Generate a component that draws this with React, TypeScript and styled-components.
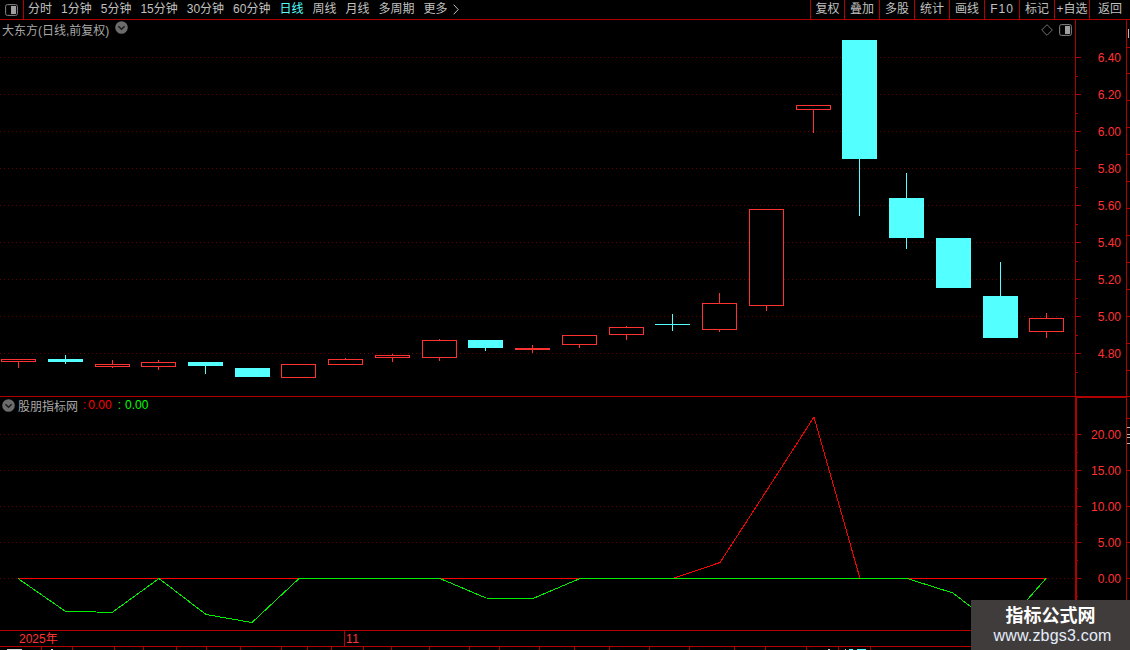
import React from "react";
import styled, { createGlobalStyle } from "styled-components";

const LINE = "#b00000";
const DOT = "#640000";
const RED = "#ff3232";
const PURE_RED = "#ff0000";
const CYAN = "#54ffff";
const GREEN = "#00f000";
const GREY = "#c0c0c0";
const FONT = `"Liberation Sans", "Noto Sans CJK SC", sans-serif`;

const Global = createGlobalStyle`
  html, body { margin: 0; padding: 0; background: #000; overflow: hidden; }
  body { font-family: ${FONT}; font-size: 12px; }
`;

const Page = styled.div`
  position: relative;
  width: 1130px;
  height: 650px;
  background: #000;
  overflow: hidden;
  display: flex;
  flex-direction: column;
`;

const Toolbar = styled.div`
  display: flex;
  align-items: center;
  height: 19px;
  flex: 0 0 19px;
  border-bottom: 1px solid ${LINE};
  box-sizing: content-box;
  color: ${GREY};
`;

const LayoutCell = styled.div`
  width: 23px;
  height: 100%;
  display: flex;
  align-items: center;
  justify-content: center;
  border-right: 1px solid ${LINE};
`;

const NavGroup = styled.nav`
  display: flex;
  align-items: center;
  gap: 9px;
  padding-left: 4px;
  flex: 1;
  white-space: nowrap;
`;

const NavItem = styled.span<{ $active?: boolean }>`
  color: ${(p) => (p.$active ? CYAN : GREY)};
  line-height: 19px;
`;

const MoreItem = styled(NavItem)`
  display: flex;
  align-items: center;
  gap: 5px;
`;

const ActionGroup = styled.div`
  display: flex;
  height: 100%;
`;

const ActionButton = styled.span<{ $w: number; $spaced?: boolean }>`
  width: ${(p) => p.$w}px;
  box-sizing: border-box;
  border-left: 1px solid ${LINE};
  line-height: 19px;
  text-align: center;
  white-space: nowrap;
  letter-spacing: ${(p) => (p.$spaced ? "1px" : "0")};
`;

const Pane = styled.section<{ $h: number }>`
  position: relative;
  display: flex;
  flex: 0 0 ${(p) => p.$h}px;
  height: ${(p) => p.$h}px;
  border-bottom: 1px solid ${LINE};
  box-sizing: content-box;
`;

const PlotSvg = styled.svg`
  display: block;
  flex: 0 0 1075px;
  width: 1075px;
  height: 100%;
  shape-rendering: crispEdges;
`;

const AxisSvg = styled.svg`
  display: block;
  flex: 0 0 55px;
  width: 55px;
  height: 100%;
  shape-rendering: crispEdges;
`;

const GridLine = styled.line`
  stroke: ${DOT};
  stroke-width: 1;
  stroke-dasharray: 1 3;
`;

const AxisStroke = styled.line<{ $w?: number; $pale?: boolean }>`
  stroke: ${(p) => (p.$pale ? "#b8b8b8" : LINE)};
  stroke-width: ${(p) => p.$w ?? 1};
`;

const AxisLabel = styled.text`
  fill: ${RED};
  font-family: ${FONT};
  font-size: 12px;
  text-anchor: end;
`;

const CandleBody = styled.rect<{ $cyan: boolean }>`
  fill: ${(p) => (p.$cyan ? CYAN : "#000")};
  stroke: ${(p) => (p.$cyan ? "none" : RED)};
  stroke-width: 1;
`;

const Wick = styled.line<{ $cyan: boolean }>`
  stroke: ${(p) => (p.$cyan ? CYAN : RED)};
  stroke-width: 1;
`;

const SeriesLine = styled.polyline<{ $color: string }>`
  fill: none;
  stroke: ${(p) => p.$color};
  stroke-width: 1;
`;

const FlatLine = styled.line<{ $color: string }>`
  stroke: ${(p) => p.$color};
  stroke-width: 1;
`;

const Legend = styled.div<{ $left: number; $top: number }>`
  position: absolute;
  left: ${(p) => p.$left}px;
  top: ${(p) => p.$top}px;
  display: flex;
  align-items: center;
  height: 16px;
  white-space: nowrap;
  color: #a8a8a8;
`;

const LegendValue = styled.span<{ $color: string; $gap: number }>`
  color: ${(p) => p.$color};
  margin-left: ${(p) => p.$gap}px;
`;

const PaneTools = styled.div`
  position: absolute;
  left: 1041px;
  top: 4px;
  display: flex;
  align-items: center;
  gap: 6px;
`;

const DateBar = styled.div`
  display: flex;
  flex: 0 0 15px;
  height: 15px;
  border-bottom: 1px solid ${LINE};
  box-sizing: content-box;
  color: ${RED};
  line-height: 17px;
`;

const YearCell = styled.span`
  width: 344px;
  padding-left: 19px;
  box-sizing: border-box;
`;

const MonthCell = styled.span`
  border-left: 1px solid ${LINE};
  padding-left: 1px;
  letter-spacing: 0.5px;
`;

const TabStrip = styled.div`
  display: flex;
  flex: 0 0 3px;
  height: 3px;
  overflow: hidden;
`;

const Tab = styled.span<{ $w: number }>`
  flex: 0 0 ${(p) => p.$w}px;
  box-sizing: border-box;
  border-right: 1px solid ${LINE};
  display: flex;
  align-items: flex-end;
`;

const TabMark = styled.i<{ $w: number; $ml: number; $cyan?: boolean }>`
  display: block;
  width: ${(p) => p.$w}px;
  height: 1px;
  margin-left: ${(p) => p.$ml}px;
  background: ${(p) => (p.$cyan ? CYAN : "#d0d0d0")};
`;

const Watermark = styled.aside`
  position: absolute;
  left: 971px;
  top: 600px;
  width: 159px;
  height: 50px;
  background: #413c3c;
  display: flex;
  flex-direction: column;
  align-items: center;
  color: #fff;
`;

const WatermarkTitle = styled.strong`
  font-size: 18px;
  line-height: 22px;
  margin-top: 5px;
`;

const WatermarkUrl = styled.span`
  font-size: 16px;
  line-height: 18px;
  letter-spacing: 0.2px;
  margin-left: 4px;
  color: #e4eefa;
`;

const PanelIcon = () => (
  <svg width="13" height="12" viewBox="0 0 13 12">
    <rect x="0.5" y="0.5" width="12" height="11" rx="2" fill="#111" stroke="#777" />
    <rect x="6" y="2" width="5" height="8" fill="#a0a0a0" />
    <rect x="2" y="2" width="4" height="8" fill="#000" />
  </svg>
);

const DiamondIcon = () => (
  <svg width="12" height="12" viewBox="0 0 12 12">
    <path d="M6 .7 11.3 6 6 11.3.7 6Z" fill="none" stroke="#707070" />
  </svg>
);

const CircleChevron = () => (
  <svg width="13" height="13" viewBox="0 0 13 13">
    <circle cx="6.5" cy="6.5" r="6.3" fill="#6c6c6c" />
    <path d="M3.4 5.2 6.5 8.2 9.6 5.2" fill="none" stroke="#1c1c1c" strokeWidth="1.6" />
  </svg>
);

const ChevronRight = () => (
  <svg width="6" height="11" viewBox="0 0 6 11">
    <path d="M.7.7 5.2 5.5.7 10.3" fill="none" stroke={GREY} />
  </svg>
);

type Candle = [x: number, top: number, bottom: number, high: number, low: number, cyan: boolean];

const candles: Candle[] = [
  [1, 359, 362, 359, 368, false],
  [48, 359, 362, 355, 364, true],
  [95, 364, 367, 360, 368, false],
  [141, 362, 367, 360, 370, false],
  [188, 362, 366, 362, 374, true],
  [235, 368, 377, 368, 377, true],
  [281, 364, 378, 364, 378, false],
  [328, 359, 365, 358, 365, false],
  [375, 355, 358, 354, 362, false],
  [422, 340, 358, 339, 361, false],
  [468, 340, 348, 340, 351, true],
  [515, 348, 350, 345, 353, false],
  [562, 335, 345, 335, 348, false],
  [609, 327, 335, 326, 340, false],
  [655, 324, 325, 314, 331, true],
  [702, 303, 330, 293, 332, false],
  [749, 209, 306, 209, 311, false],
  [796, 105, 110, 105, 133, false],
  [842, 40, 159, 40, 216, true],
  [889, 198, 238, 173, 249, true],
  [936, 238, 288, 238, 288, true],
  [983, 296, 338, 262, 338, true],
  [1029, 318, 332, 313, 338, false],
];

const priceGrid = [
  [57, "6.40"], [94, "6.20"], [131, "6.00"], [168, "5.80"], [205, "5.60"],
  [242, "5.40"], [279, "5.20"], [316, "5.00"], [353, "4.80"],
] as const;

const indicatorGrid = [
  [434, "20.00"], [470, "15.00"], [506, "10.00"], [542, "5.00"], [578, "0.00"],
] as const;

const redPts = "673,578.5 720,562.5 767,490 814,417 860,578.5";
const greenDips = [
  "18,578.5 65,611 112,612.5 159,578.5 206,614.5 252,622.5 299,578.5",
  "440,578.5 486,598 533,598.5 580,578.5",
  "907,578.5 953,593 971,607 1000,630 1027,600 1046,578.5",
];

const navItems = ["分时", "1分钟", "5分钟", "15分钟", "30分钟", "60分钟", "日线", "周线", "月线", "多周期"];
const actions: [string, number, boolean?][] = [
  ["复权", 34], ["叠加", 35], ["多股", 35], ["统计", 35], ["画线", 35],
  ["F10", 35, true], ["标记", 35], ["+自选", 35], ["返回", 41],
];
const tabs = [42, 31, 42, 29, 33, 30, 34, 41, 26, 24, 32, 28, 38, 40, 30, 40, 35, 35, 40, 40, 45, 31, 41, 32, 32, 259];

const rightTicks = [47, 73, 100, 127, 154, 181, 208, 235, 262, 289, 316, 343, 370];
const indicatorRightTicks = [418, 427, 434, 437, 443, 470, 506, 542, 578];

const App: React.FC = () => (
  <Page>
    <Global />
    <Toolbar>
      <LayoutCell>
        <PanelIcon />
      </LayoutCell>
      <NavGroup>
        {navItems.map((t) => (
          <NavItem key={t} $active={t === "日线"}>
            {t}
          </NavItem>
        ))}
        <MoreItem>
          更多
          <ChevronRight />
        </MoreItem>
      </NavGroup>
      <ActionGroup>
        {actions.map(([t, w, s]) => (
          <ActionButton key={t} $w={w} $spaced={s}>
            {t}
          </ActionButton>
        ))}
      </ActionGroup>
    </Toolbar>

    <Pane $h={376}>
      <PlotSvg viewBox="0 20 1075 376">
        {priceGrid.map(([y]) => (
          <GridLine key={y} x1={0} x2={1075} y1={y + 0.5} y2={y + 0.5} />
        ))}
        {candles.map(([x, top, bottom, high, low, cyan]) => {
          const c = x + 17.5;
          return (
            <g key={x}>
              {high < top && <Wick $cyan={cyan} x1={c} x2={c} y1={high} y2={top} />}
              {low > bottom && <Wick $cyan={cyan} x1={c} x2={c} y1={bottom} y2={low} />}
              {cyan ? (
                <CandleBody $cyan x={x} y={top} width={35} height={bottom - top} />
              ) : (
                <CandleBody $cyan={false} x={x + 0.5} y={top + 0.5} width={34} height={bottom - top - 1} />
              )}
            </g>
          );
        })}
      </PlotSvg>
      <AxisSvg viewBox="1075 20 55 376">
        <AxisStroke x1={1075.5} x2={1075.5} y1={20} y2={396} />
        <AxisStroke x1={1126.5} x2={1126.5} y1={20} y2={396} />
        {priceGrid.map(([y, t]) => (
          <g key={y}>
            <AxisStroke x1={1075} x2={1081} y1={y + 0.5} y2={y + 0.5} />
            <AxisStroke x1={1075} x2={1078} y1={y + 19.5} y2={y + 19.5} />
            <AxisLabel x={1121} y={y + 5}>
              {t}
            </AxisLabel>
          </g>
        ))}
        <AxisStroke $pale x1={1128} x2={1128} y1={29} y2={38} />
        {rightTicks.map((y) => (
          <AxisStroke key={y} x1={1127} x2={1130} y1={y + 0.5} y2={y + 0.5} />
        ))}
      </AxisSvg>
      <Legend $left={2} $top={1}>
        大东方(日线,前复权)
        <LegendValue $color="#a8a8a8" $gap={6}>
          <CircleChevron />
        </LegendValue>
      </Legend>
      <PaneTools>
        <DiamondIcon />
        <PanelIcon />
      </PaneTools>
    </Pane>

    <Pane $h={233}>
      <PlotSvg viewBox="0 397 1075 233">
        {indicatorGrid.map(([y]) => (
          <GridLine key={y} x1={0} x2={1075} y1={y + 0.5} y2={y + 0.5} />
        ))}
        <FlatLine $color={PURE_RED} x1={18} x2={1047} y1={578.5} y2={578.5} />
        <SeriesLine $color={PURE_RED} points={redPts} />
        <FlatLine $color={GREEN} x1={299} x2={440} y1={578.5} y2={578.5} />
        <FlatLine $color={GREEN} x1={580} x2={907} y1={578.5} y2={578.5} />
        {greenDips.map((p) => (
          <SeriesLine key={p} $color={GREEN} points={p} />
        ))}
      </PlotSvg>
      <AxisSvg viewBox="1075 397 55 233">
        <AxisStroke $w={2} x1={1076} x2={1076} y1={397} y2={630} />
        <AxisStroke $w={2} x1={1075} x2={1126} y1={397} y2={397} />
        <AxisStroke x1={1126.5} x2={1126.5} y1={397} y2={630} />
        {indicatorGrid.map(([y, t]) => (
          <g key={y}>
            <AxisStroke x1={1075} x2={1081} y1={y + 0.5} y2={y + 0.5} />
            <AxisStroke x1={1075} x2={1078} y1={y + 18.5} y2={y + 18.5} />
            <AxisLabel x={1121} y={y + 5}>
              {t}
            </AxisLabel>
          </g>
        ))}
        {indicatorRightTicks.map((y, i) => (
          <AxisStroke key={y} $pale={i > 0 && i < 5} x1={1127} x2={1130} y1={y + 0.5} y2={y + 0.5} />
        ))}
      </AxisSvg>
      <Legend $left={2} $top={0}>
        <CircleChevron />
        <LegendValue $color="#a8a8a8" $gap={3}>
          股朋指标网
        </LegendValue>
        <LegendValue $color={PURE_RED} $gap={5}>
          :
        </LegendValue>
        <LegendValue $color={PURE_RED} $gap={2}>
          0.00
        </LegendValue>
        <LegendValue $color="#00ff00" $gap={6}>
          :
        </LegendValue>
        <LegendValue $color="#00ff00" $gap={4}>
          0.00
        </LegendValue>
      </Legend>
    </Pane>

    <DateBar>
      <YearCell>2025年</YearCell>
      <MonthCell>11</MonthCell>
    </DateBar>

    <TabStrip>
      {tabs.map((w, i) => (
        <Tab key={i} $w={w}>
          {i === 0 && <TabMark $w={15} $ml={7} />}
          {i === 1 && <TabMark $w={2} $ml={9} />}
          {i === 23 && <TabMark $w={2} $ml={21} />}
          {i === 24 && (
            <>
              <TabMark $w={1} $ml={6} />
              <TabMark $w={4} $ml={3} $cyan />
              <TabMark $w={9} $ml={4} $cyan />
            </>
          )}
        </Tab>
      ))}
    </TabStrip>

    <Watermark>
      <WatermarkTitle>指标公式网</WatermarkTitle>
      <WatermarkUrl>www.zbgs3.com</WatermarkUrl>
    </Watermark>
  </Page>
);

export default App;
